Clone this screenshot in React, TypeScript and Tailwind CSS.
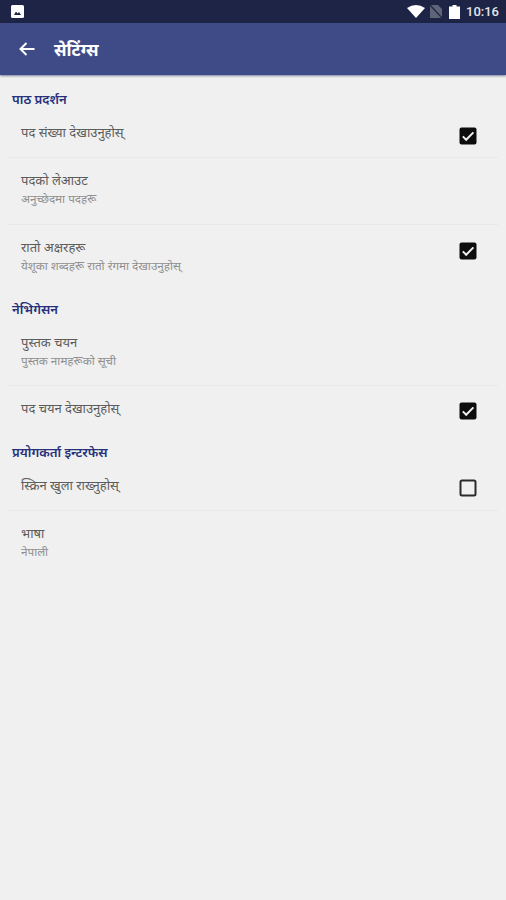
const font = { fontFamily: '"Noto Sans", "Noto Sans Devanagari", "Lohit Devanagari", Roboto, sans-serif' };

function Check({ on, className }: { on: boolean; className?: string }) {
  return (
    <svg width="18" height="18" viewBox="0 0 18 18" className={`shrink-0 ${className ?? 'mt-[16px]'}`}>
      {on ? (
        <>
          <rect x="0.5" y="0.5" width="17" height="17" rx="2" fill="#0d0d0d" />
          <path d="M3.8 9.4 L7.2 12.8 L14.4 5.4" fill="none" stroke="#f0f0f0" strokeWidth="2" />
        </>
      ) : (
        <rect x="1.5" y="1.5" width="15" height="15" rx="1.5" fill="none" stroke="#2a2a2a" strokeWidth="2" />
      )}
    </svg>
  );
}

function Header({ children, className }: { children: string; className: string }) {
  return <div className={`mb-[3px] pl-3 text-[13px] leading-[16px] font-semibold text-[#27307a] ${className}`}>{children}</div>;
}

function Row({ title, sub, check, checkClass, divider, className }: { title: string; sub?: string; check?: boolean; checkClass?: string; divider?: boolean; className: string }) {
  return (
    <div className={`mx-2 flex items-start justify-between pl-[13px] pr-[21px] ${divider ? 'border-b border-[#e8e8e8]' : ''} ${className}`}>
      <div className="flex flex-col pt-[13px]">
        <div className="text-[13px] leading-[18px] text-[#5c5c5c]">{title}</div>
        {sub && <div className="text-[11.7px] leading-[18.5px] text-[#8f8f8f]">{sub}</div>}
      </div>
      {check !== undefined && <Check on={check} className={checkClass} />}
    </div>
  );
}

export default function App() {
  return (
    <div className="flex h-[900px] w-[506px] flex-col overflow-hidden bg-[#f0f0f0]" style={font}>
      <div className="flex h-[23px] items-center justify-between bg-[#1d2445] pl-[11px] pr-[7px]">
        <svg width="13" height="13" viewBox="0 0 13 13">
          <rect x="0" y="0" width="13" height="13" rx="1.5" fill="#fff" />
          <path d="M3 10 L5 6.5 L6.5 8.5 L8 7 L10 10 Z" fill="#1d2445" />
        </svg>
        <div className="flex items-center">
          <svg width="18" height="13" viewBox="0 0 18 13">
            <path d="M0 3 Q9 -3 18 3 L9 13 Z" fill="#fff" />
          </svg>
          <svg width="12" height="13" viewBox="0 0 12 13" className="ml-[5px]">
            <path d="M0 0 H8 L12 4 V13 H0 Z" fill="#5f6579" />
            <path d="M0 0 L12 13" stroke="#1d2445" strokeWidth="1.2" />
          </svg>
          <svg width="11" height="14" viewBox="0 0 11 14" className="ml-[7px]">
            <path d="M3.5 0 H7.5 V1.5 H11 V14 H0 V1.5 H3.5 Z" fill="#fff" />
          </svg>
          <span className="ml-[6px] text-[13px] font-medium leading-none text-[#e4e6ec]" style={{ fontFamily: 'Roboto, sans-serif' }}>10:16</span>
        </div>
      </div>
      <div className="flex h-[52px] items-center bg-[#3f4b87] pl-[19px] shadow-[0_1px_2px_rgba(40,50,110,0.6)]">
        <svg width="16" height="14" viewBox="0 0 16 14">
          <path d="M15.5 7 H2 M7.5 1 L1.5 7 L7.5 13" fill="none" stroke="#fff" strokeWidth="2" />
        </svg>
        <span className="ml-[19px] text-[17px] font-bold leading-none text-white">सेटिंग्स</span>
      </div>
      <Header className="mt-[16px]">पाठ प्रदर्शन</Header>
      <Row className="h-[48px]" title="पद संख्या देखाउनुहोस्" check checkClass="mt-[17px]" divider />
      <Row className="h-[67px]" title="पदको लेआउट" sub="अनुच्छेदमा पदहरू" divider />
      <Row className="h-[66px]" title="रातो अक्षरहरू" sub="येशूका शब्दहरू रातो रंगमा देखाउनुहोस्" check checkClass="mt-[17px]" />
      <Header className="mt-[10px]">नेभिगेसन</Header>
      <Row className="h-[66px]" title="पुस्तक चयन" sub="पुस्तक नामहरूको सूची" divider />
      <Row className="h-[50px]" title="पद चयन देखाउनुहोस्" check />
      <Header className="mt-[8px]">प्रयोगकर्ता इन्टरफेस</Header>
      <Row className="h-[48px]" title="स्क्रिन खुला राख्नुहोस्" check={false} divider />
      <Row className="h-[66px]" title="भाषा" sub="नेपाली" />
    </div>
  );
}
